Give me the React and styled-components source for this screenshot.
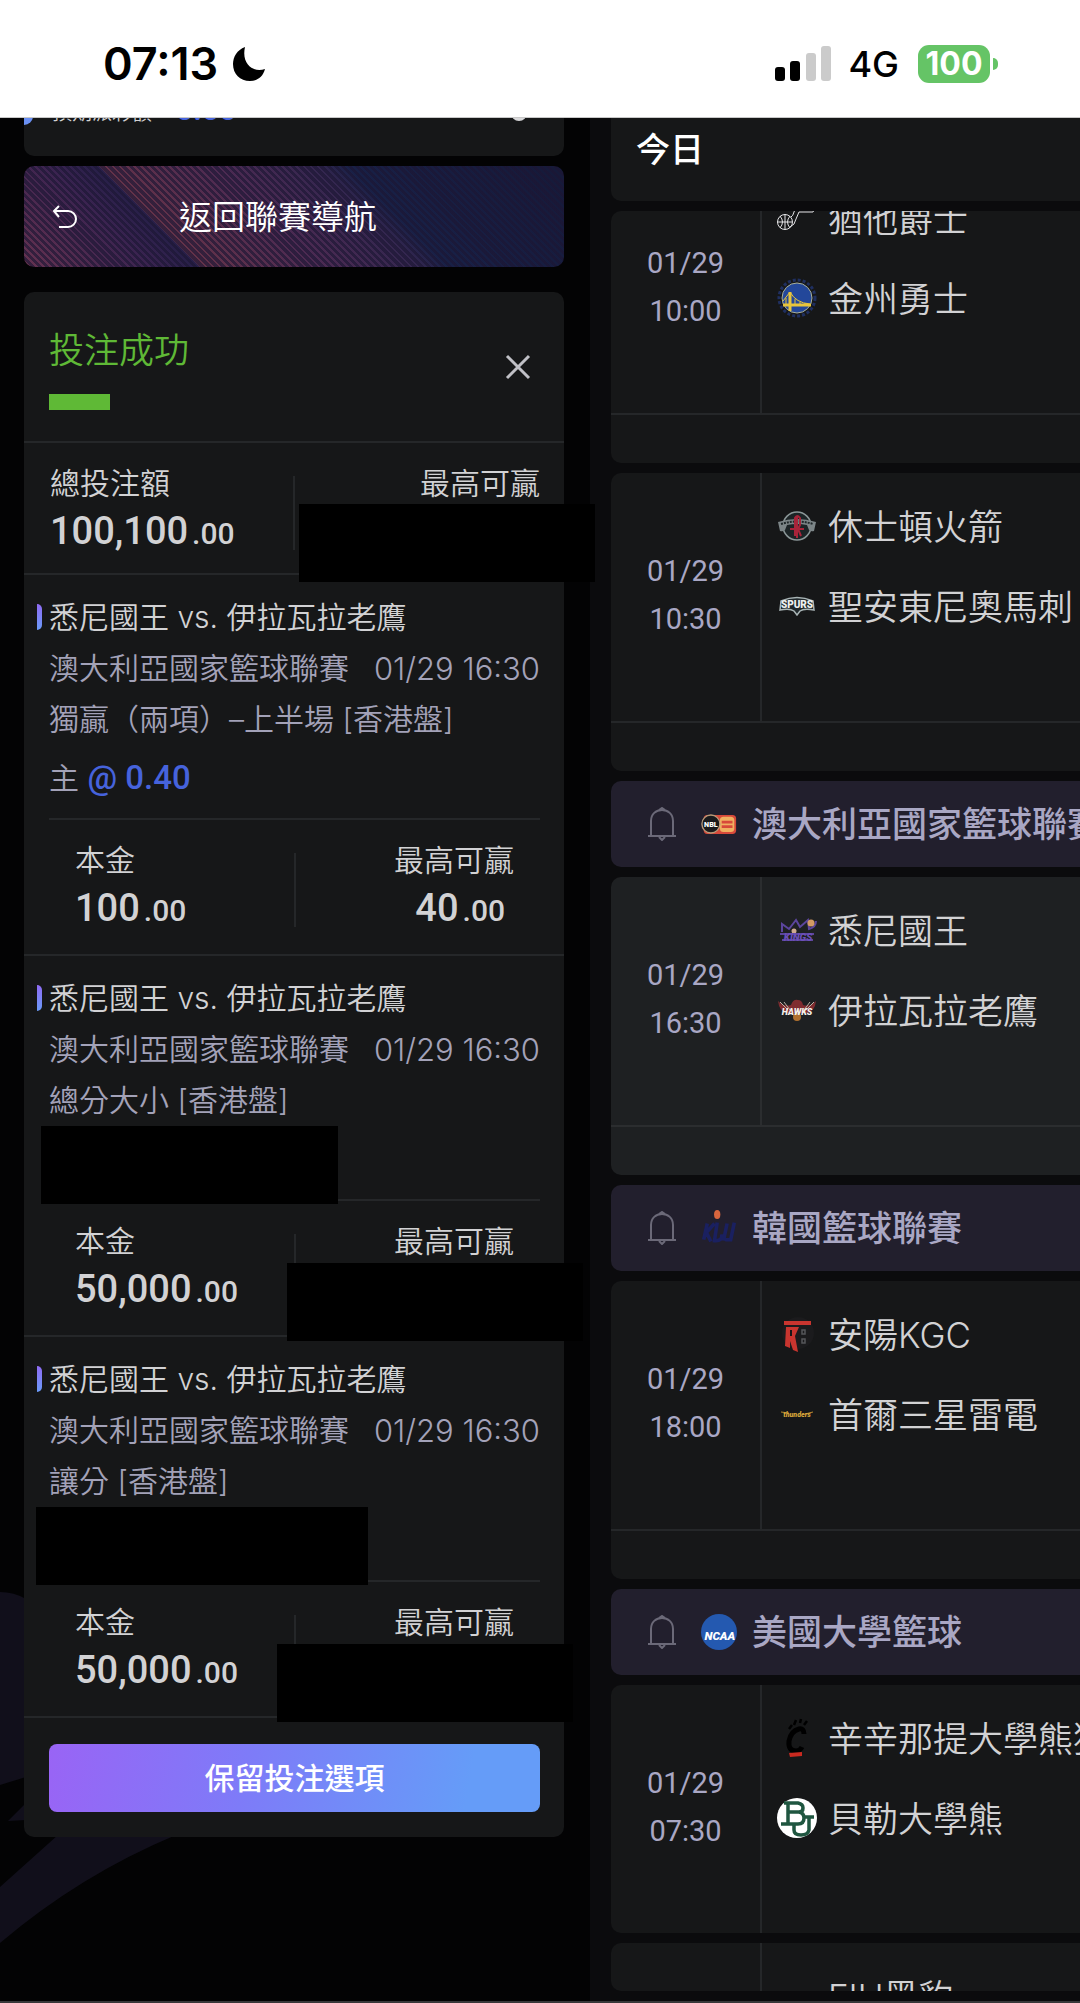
import React from 'react'
import styled, { createGlobalStyle } from 'styled-components'

const colors = {
  page: '#030304',
  rail: '#0b0b0d',
  card: '#161718',
  cardActive: '#1e2022',
  league: '#221f2d',
  line: '#252729',
  lineActive: '#2b2d2f',
  text: '#d2d2d4',
  muted: '#a3a2b8',
  time: '#a9a7c4',
  win: '#5fb936',
  odds: '#4663dc',
}

const sans = `Inter, 'Noto Sans CJK TC', sans-serif`
const numeric = `Roboto, 'Noto Sans CJK TC', sans-serif`

const GlobalStyle = createGlobalStyle`
  *, *::before, *::after {
    box-sizing: border-box;
  }
  body {
    margin: 0;
    background: ${colors.page};
    color: ${colors.text};
    font-family: ${sans};
    font-size: 30px;
    font-weight: 350;
  }
  h1, h2, p, ul {
    margin: 0;
    padding: 0;
    font-size: inherit;
    font-weight: inherit;
    list-style: none;
  }
  button {
    padding: 0;
    border: 0;
    background: none;
    color: inherit;
    font: inherit;
    cursor: pointer;
  }
  svg {
    display: block;
    flex: none;
  }
`

const Screen = styled.div`
  display: flex;
  flex-direction: column;
  height: 100vh;
  overflow: hidden;
  border-bottom: 2px solid #38383a;
`

const StatusBar = styled.header`
  display: flex;
  flex: none;
  align-items: center;
  justify-content: space-between;
  height: 118px;
  padding: 10px 82px 0 103px;
  border-bottom: 1px solid #c8c8c8;
  background: #fff;
  color: #000;

  .side {
    display: flex;
    align-items: center;
  }
  .clock {
    margin-right: 14px;
    font-size: 45px;
    font-weight: 600;
  }
  .network {
    margin: 0 19px 0 17px;
    font-size: 36px;
    font-weight: 500;
  }
`

const Battery = styled.div`
  display: flex;
  align-items: center;
  gap: 3px;

  .level {
    width: 72px;
    border-radius: 11px;
    background: #65c466;
    color: #fff;
    font-size: 32px;
    font-weight: 700;
    line-height: 38px;
    text-align: center;
  }
  .tip {
    width: 5px;
    height: 12px;
    border-radius: 0 6px 6px 0;
    background: #65c466;
  }
`

const Columns = styled.div`
  display: grid;
  flex: 1;
  grid-template-columns: 59fr 49fr;
  min-height: 0;
`

const Slip = styled.main`
  position: relative;
  min-width: 0;
  padding: 0 26px 0 24px;
`

// Decoration that sits behind the slip
const Swoosh = styled.svg`
  position: absolute;
  z-index: -1;
  left: 0;
  bottom: 38px;
`

const Card = styled.section`
  border-radius: 10px;
  background: ${colors.card};
`

const BalanceCard = styled(Card)`
  position: relative;
  display: flex;
  align-items: flex-end;
  justify-content: space-between;
  height: 38px;
  margin-bottom: 10px;
  padding: 0 37px 29px 28px;
  overflow: hidden;
  border-radius: 0 0 10px 10px;
  font-size: 20px;
  line-height: 28px;

  &::before {
    position: absolute;
    bottom: 31px;
    left: 0;
    width: 9px;
    height: 32px;
    border-radius: 0 9px 9px 0;
    background: #6a90f4;
    content: '';
  }
  .amount {
    margin-left: 24px;
    color: ${colors.odds};
    font-family: ${numeric};
    font-size: 30px;
    font-weight: 700;
  }
  .dot {
    width: 16px;
    height: 16px;
    margin-bottom: 6px;
    border-radius: 50%;
    background: #d8d8da;
  }
`

const BackButton = styled.button`
  display: flex;
  align-items: center;
  width: 100%;
  height: 101px;
  margin-bottom: 25px;
  padding: 0 28px;
  border-radius: 10px;
  background: repeating-linear-gradient(
      45deg,
      rgba(28, 22, 52, 0.65) 0 3px,
      transparent 3px 5px
    ),
    linear-gradient(
      45deg,
      #66324f 0,
      #3a2350 90px,
      #261f48 124px,
      #643248 125px,
      #4c2a52 210px,
      #33264f 280px,
      #182046 300px,
      #161a3a 440px
    );
  color: #fff;
  font-size: 33px;

  span {
    flex: 1;
    padding: 0 58px 4px 0;
    text-align: center;
  }
`

const SlipHeader = styled.div`
  display: flex;
  align-items: center;
  justify-content: space-between;
  height: 149px;
  padding: 0 32px 0 25px;

  h1 {
    color: ${colors.win};
    font-size: 35px;
    line-height: 52px;
  }
  h1::after {
    display: block;
    width: 61px;
    height: 16px;
    margin-top: 18px;
    background: ${colors.win};
    content: '';
  }
`

const Divided = styled.div`
  position: relative;
  border-top: 2px solid ${colors.line};
`

const Stakes = styled.div`
  display: flex;
  justify-content: space-between;
  height: ${props => (props.$nested ? 134 : 130)}px;
  padding: ${props => (props.$nested ? '18px 26px' : '18px 24px 0 26px')};
  background: linear-gradient(${colors.line}, ${colors.line}) no-repeat 50% 33px /
    2px 74px;

  .label {
    line-height: 45px;
  }
  .value {
    font-family: ${numeric};
    font-size: 38px;
    font-weight: 500;
    line-height: 50px;
  }
  .value small {
    margin-left: 4px;
    font-size: 30px;
  }
  .win {
    text-align: right;
  }
  .win .value {
    padding-right: 9px;
  }
`

const Bet = styled(Divided)`
  padding: 17px 24px 0 25px;

  p {
    color: ${colors.muted};
    line-height: 51px;
    white-space: nowrap;
  }
  .teams {
    position: relative;
    color: ${colors.text};
  }
  .teams::before {
    position: absolute;
    top: 12px;
    left: -12px;
    width: 5px;
    height: 26px;
    border-radius: 0 5px 5px 0;
    background: linear-gradient(#8f6bf5, #6a9bf8);
    content: '';
  }
  .league {
    display: flex;
    justify-content: space-between;
  }
  .league time {
    font-size: 31px;
  }
  .pick {
    height: 73px;
    line-height: 66px;
  }
  .pick b {
    color: ${colors.odds};
    font-family: ${numeric};
    font-size: 33px;
    font-weight: 500;
  }
`

// Blanks out an amount, on top of whatever is under it
const Mask = styled.div`
  position: absolute;
  z-index: 1;
  top: ${props => props.$top}px;
  left: ${props => props.$left}px;
  width: ${props => props.$width}px;
  height: 78px;
  background: #000;
`

const SlipFooter = styled(Divided)`
  padding: 26px 24px 25px 25px;

  button {
    width: 100%;
    border-radius: 8px;
    background: linear-gradient(100deg, #9964f5, #7e7bf8 40%, #659cf8 85%);
    color: #fff;
    font-weight: 500;
    line-height: 68px;
  }
`

const Schedule = styled.aside`
  display: flex;
  flex-direction: column;
  min-width: 0;
  min-height: 0;
  padding: 0 0 10px 21px;
  background: ${colors.rail};
`

const Day = styled.h2`
  flex: none;
  height: 83px;
  margin-bottom: 10px;
  padding-left: 25px;
  border-radius: 0 0 0 10px;
  background: ${colors.card};
  color: #fff;
  font-size: 34px;
  font-weight: 500;
  line-height: 64px;
`

const GameList = styled.div`
  display: flex;
  flex: 1;
  flex-direction: column;
  gap: 10px;
  min-height: 0;
  overflow: hidden;
  border-radius: 10px 0 0 10px;
`

const League = styled.div`
  display: flex;
  flex: none;
  align-items: center;
  height: 86px;
  padding-left: 36px;
  border-radius: 10px 0 0 10px;
  background: ${colors.league};
  color: ${colors.time};
  font-size: 35px;
  font-weight: 500;
  white-space: nowrap;

  button {
    margin-right: 24px;
  }
  h2 {
    margin-left: 15px;
    padding-bottom: 5px;
  }
`

const Game = styled.article`
  flex: none;
  margin-top: ${props => (props.$scrolled ? '-46px' : 0)};
  overflow: hidden;
  border-radius: 10px 0 0 10px;
  border-color: ${props => (props.$active ? colors.lineActive : colors.line)};
  background: ${props => (props.$active ? colors.cardActive : colors.card)};

  .body {
    display: flex;
    height: 248px;
    border-color: inherit;
  }
  .time {
    display: flex;
    flex: none;
    flex-direction: column;
    justify-content: center;
    width: 151px;
    padding-bottom: 4px;
    border-color: inherit;
    border-right-style: solid;
    border-right-width: 2px;
    color: ${colors.time};
    font-family: ${numeric};
    font-size: 29px;
    font-weight: 400;
    line-height: 48px;
    text-align: center;
  }
  .teams {
    padding: 11px 0 0 15px;
  }
  .extra {
    height: 50px;
    border-color: inherit;
    border-top-style: solid;
    border-top-width: 2px;
  }
`

const Team = styled.li`
  display: flex;
  align-items: center;
  gap: 11px;
  height: 80px;
  font-size: 35px;
  white-space: nowrap;

  svg {
    margin-top: 4px;
  }
`

const Logo = ({ children, size = 40 }) => (
  <svg width={size} height={size} viewBox="0 0 40 40" aria-hidden="true">
    {children}
  </svg>
)

const logos = {
  jazz: (
    <Logo>
      <g fill="none" stroke="#e4e4e6">
        <circle cx="8" cy="24" r="7.5" />
        <path d="M8 16v16M0 24h15M3 18q5 6 0 12M13 18q-5 6 0 12M13 29q5-2 6-8l3-7h14l2-4M14 19q2-1 3-5l2-5" />
      </g>
    </Logo>
  ),
  warriors: (
    <Logo>
      <circle cx="20" cy="20" r="18" fill="none" stroke="#1f2f60" strokeWidth="3" strokeDasharray="3 2" />
      <circle cx="20" cy="20" r="15" fill="#23479a" stroke="#a9b09a" />
      <path d="M6 27h28M13 14v19" stroke="#e8c53c" strokeWidth="3" />
      <path d="M6 23l7-9q6 11 20 12M18 21v6M23 24v4M28 25v3M9 20v7" fill="none" stroke="#e8c53c" />
    </Logo>
  ),
  rockets: (
    <Logo>
      <circle cx="20" cy="20" r="14" fill="#1c2426" stroke="#8b9798" strokeWidth="1.5" />
      <path d="M1 16q19-6 38 0l-2 9q-3 1-5-1l-2-5q-10-2-20 0l-2 5q-2 2-5 1z" fill="#7c8587" />
      <path d="M4 18q16-5 32 0" fill="none" stroke="#20282a" strokeWidth="2" strokeDasharray="2 1" />
      <path d="M18 30V12q2-4 5 0v7l-2 4 3 7M13 23h14M20 10v22" fill="none" stroke="#a8243a" strokeWidth="2" />
    </Logo>
  ),
  spurs: (
    <Logo>
      <path d="M4 15q16-7 32 0l1 9q-10-2-14 1l-3 4-3-4q-4-3-14-1z" fill="#20282b" stroke="#a9b5b6" strokeWidth="1.5" />
      <text x="20" y="22" textAnchor="middle" fontFamily="Roboto" fontSize="10" fontWeight="900" fill="#eef1f1">
        SPURS
      </text>
    </Logo>
  ),
  kings: (
    <Logo>
      <path d="M5 22V14l7 5 7-9 4 7 8-7 1 9q7-2 7-8" fill="none" stroke="#5b459c" strokeWidth="2" />
      <circle cx="34" cy="13" r="3.5" fill="#d39a63" />
      <circle cx="17" cy="21" r="2.5" fill="#cfa98f" />
      <path d="M3 23h34v2H3zM5 29h31v2H5z" fill="#5b459c" />
      <text x="21" y="31" textAnchor="middle" fontFamily="Roboto" fontSize="10" fontWeight="900" fontStyle="italic" fill="#6b4fb8">
        KINGS
      </text>
    </Logo>
  ),
  hawks: (
    <Logo>
      <path d="M1 11q6 6 13 4 2-6 7-5 4 0 5 5 7 2 13-4-1 10-9 12H10Q2 21 1 11z" fill="#7f2c30" />
      <path d="M3 12l8 8M7 12l6 8M37 12l-8 8M33 12l-6 8" stroke="#b9b3a7" />
      <circle cx="20" cy="27" r="4" fill="#b0702f" />
      <text x="20" y="25" textAnchor="middle" fontFamily="Roboto" fontSize="9" fontWeight="900" fontStyle="italic" fill="#f4f1ec">
        HAWKS
      </text>
    </Logo>
  ),
  kgc: (
    <Logo>
      <circle cx="21" cy="19" r="16" fill="#1b1b1d" />
      <path d="M7 7h27v4H7zM9 13h13l-4 9 3 16-5-2-3-9v7l-5-2z" fill="#c8352f" />
      <path d="M14 16v6" stroke="#161718" strokeWidth="2" />
      <path d="M25 16h3v4h-3zM25 25h3v4h-3z" fill="none" stroke="#56575a" strokeWidth="1.5" />
    </Logo>
  ),
  thunders: (
    <Logo>
      <path d="M4 18l8 1M36 18l-8 2" stroke="#b98b30" />
      <text x="20" y="23" textAnchor="middle" fontFamily="Roboto" fontSize="7" fontWeight="900" fontStyle="italic" fill="#d9a63a">
        thunders
      </text>
    </Logo>
  ),
  bearcats: (
    <Logo>
      <path d="M27 16q0-6-5-5-8 2-10 12-1 10 7 10 4 0 6-4" fill="none" stroke="#000" strokeWidth="5" />
      <path d="M12 11l3-4M17 7l2-5M23 5l1-4M27 7l3-4" stroke="#000" strokeWidth="2.5" />
      <path d="M12 35l13-1v4l-12 1z" fill="#c92a20" />
    </Logo>
  ),
  baylor: (
    <Logo>
      <circle cx="20" cy="20" r="20" fill="#fff" />
      <path d="M7 5h14q5 1 5 5t-4 4q5 1 5 6 0 6-6 6H4M11 5v21M11 14h11M17 26v6q0 5 7 5t8-5V20M28 19h9" fill="none" stroke="#1f5640" strokeWidth="3.5" />
    </Logo>
  ),
  fiu: (
    <Logo>
      <path d="M2 35v-5h12v5M16 35v-5h5v5M24 35v-5h5v5M33 35v-5h5v5" fill="#10193a" stroke="#8d8462" />
    </Logo>
  ),
  nbl: (
    <Logo size={36}>
      <rect x="3" y="10" width="36" height="21" rx="4" fill="#d8493a" />
      <rect x="21" y="12" width="16" height="17" rx="4" fill="#f0b060" />
      <path d="M23 18h12M23 23h12" stroke="#d8493a" strokeWidth="3" />
      <circle cx="11" cy="20" r="10" fill="#1a1a1c" stroke="#b89a78" strokeWidth="1.5" />
      <text x="11" y="23" textAnchor="middle" fontFamily="Roboto" fontSize="8" fontWeight="900" fill="#fff">
        NBL
      </text>
    </Logo>
  ),
  kbl: (
    <Logo size={36}>
      <ellipse cx="18" cy="5" rx="3.5" ry="5" fill="#d8653e" />
      <path d="M7 15L3 33M15 15L6 25l5 10M18 14l-3 20q9 1 8-7M29 15l-4 19M37 14l-4 19h-6" fill="none" stroke="#1a2060" strokeWidth="4" />
    </Logo>
  ),
  ncaa: (
    <Logo size={36}>
      <circle cx="20" cy="20" r="20" fill="#2459b0" />
      <text x="21" y="29" textAnchor="middle" fontFamily="Roboto" fontSize="13" fontWeight="900" fontStyle="italic" fill="#fff">
        NCAA
      </text>
    </Logo>
  ),
}

const BellIcon = () => (
  <svg width="30" height="34" viewBox="0 0 30 34" fill="none" stroke="#6b6978" strokeWidth="2">
    <path d="M1 29h28M4 29V14C4 7 9 3 15 3s11 4 11 11v15M12 3l3-2 3 2M12 30l3 3 3-3" />
  </svg>
)

const schedule = [
  { time: '10:00', scrolled: true, extra: true, teams: [['jazz', '猶他爵士'], ['warriors', '金州勇士']] },
  { time: '10:30', extra: true, teams: [['rockets', '休士頓火箭'], ['spurs', '聖安東尼奧馬刺']] },
  { league: '澳大利亞國家籃球聯賽', logo: 'nbl' },
  { time: '16:30', active: true, extra: true, teams: [['kings', '悉尼國王'], ['hawks', '伊拉瓦拉老鷹']] },
  { league: '韓國籃球聯賽', logo: 'kbl' },
  { time: '18:00', extra: true, teams: [['kgc', '安陽KGC'], ['thunders', '首爾三星雷電']] },
  { league: '美國大學籃球', logo: 'ncaa' },
  { time: '07:30', teams: [['bearcats', '辛辛那提大學熊狸'], ['baylor', '貝勒大學熊']] },
  { teams: [['fiu', 'FIU黑豹']] },
]

const bets = [
  { market: '獨贏（兩項）–上半場 [香港盤]', pick: '主', odds: '0.40', stake: '100', win: '40' },
  { market: '總分大小 [香港盤]', stake: '50,000', masks: [[170, 17, 297], [307, 263, 296]] },
  { market: '讓分 [香港盤]', stake: '50,000', masks: [[170, 12, 332], [307, 253, 296]] },
]

const Money = ({ value }) => (
  <div className="value">
    {value}
    <small>.00</small>
  </div>
)

const StakeRow = ({ label, stake, win, nested }) => (
  <Stakes $nested={nested}>
    <div>
      <div className="label">{label}</div>
      <Money value={stake} />
    </div>
    <div className="win">
      <div className="label">最高可贏</div>
      {win && <Money value={win} />}
    </div>
  </Stakes>
)

const BetItem = ({ market, pick, odds, stake, win, masks = [] }) => (
  <Bet>
    <p className="teams">悉尼國王 vs. 伊拉瓦拉老鷹</p>
    <p className="league">
      <span>澳大利亞國家籃球聯賽</span>
      <time>01/29 16:30</time>
    </p>
    <p>{market}</p>
    <p className="pick">
      {pick} {odds && <b>@ {odds}</b>}
    </p>
    <Divided>
      <StakeRow nested label="本金" stake={stake} win={win} />
    </Divided>
    {masks.map(([top, left, width]) => (
      <Mask key={top} $top={top} $left={left} $width={width} />
    ))}
  </Bet>
)

const GameCard = ({ time, teams, scrolled, active, extra }) => (
  <Game $scrolled={scrolled} $active={active}>
    <div className="body">
      <div className="time">
        {time && <span>01/29</span>}
        {time && <span>{time}</span>}
      </div>
      <ul className="teams">
        {teams.map(([logo, name]) => (
          <Team key={name}>
            {logos[logo]}
            {name}
          </Team>
        ))}
      </ul>
    </div>
    {extra && <div className="extra" />}
  </Game>
)

const Status = () => (
  <StatusBar>
    <div className="side">
      <span className="clock">07:13</span>
      <svg width="34" height="36" viewBox="0 0 34 36">
        <path d="M13 1C5 4 1 11 1 18c0 10 7 17 17 17 7 0 13-4 15-12-11 4-24-4-20-22z" />
      </svg>
    </div>
    <div className="side">
      <svg width="56" height="36" viewBox="0 0 56 36">
        <rect y="21" width="10" height="14" rx="3" />
        <rect x="15" y="15" width="10" height="20" rx="3" />
        <rect x="31" y="7" width="10" height="28" rx="3" fill="#cbcbcb" />
        <rect x="46" width="10" height="35" rx="3" fill="#cbcbcb" />
      </svg>
      <span className="network">4G</span>
      <Battery>
        <span className="level">100</span>
        <span className="tip" />
      </Battery>
    </div>
  </StatusBar>
)

const App = () => (
  <Screen>
    <GlobalStyle />
    <Status />
    <Columns>
      <Slip>
        <Swoosh width="180" height="372" viewBox="0 0 180 372" fill="#110f1b">
          <path d="M0 1q14 0 26 7v178l-26 8zM8 230l18-18v17zM0 296l58-52h118Q80 284 0 352z" />
        </Swoosh>
        <BalanceCard>
          <div>
            預期派彩額<span className="amount">0.00</span>
          </div>
          <span className="dot" />
        </BalanceCard>
        <BackButton type="button">
          <svg width="26" height="24" viewBox="0 0 26 24" fill="none" stroke="#fff" strokeWidth="2">
            <path d="M7 1L2 6l5 6M2 6h14a8 8 0 0 1 0 16H7" />
          </svg>
          <span>返回聯賽導航</span>
        </BackButton>
        <Card>
          <SlipHeader>
            <h1>投注成功</h1>
            <button type="button" aria-label="關閉">
              <svg width="28" height="28" viewBox="0 0 28 28" stroke="#c0c0c6" strokeWidth="3">
                <path d="M3 3l22 22M25 3L3 25" />
              </svg>
            </button>
          </SlipHeader>
          <Divided>
            <StakeRow label="總投注額" stake="100,100" />
            <Mask $top={61} $left={275} $width={296} />
          </Divided>
          {bets.map(bet => (
            <BetItem key={bet.market} {...bet} />
          ))}
          <SlipFooter>
            <button type="button">保留投注選項</button>
          </SlipFooter>
        </Card>
      </Slip>
      <Schedule>
        <Day>今日</Day>
        <GameList>
          {schedule.map(item =>
            item.league ? (
              <League key={item.league}>
                <button type="button" aria-label={`${item.league} 通知`}>
                  <BellIcon />
                </button>
                {logos[item.logo]}
                <h2>{item.league}</h2>
              </League>
            ) : (
              <GameCard key={item.teams[0][0]} {...item} />
            )
          )}
        </GameList>
      </Schedule>
    </Columns>
  </Screen>
)

export default App
